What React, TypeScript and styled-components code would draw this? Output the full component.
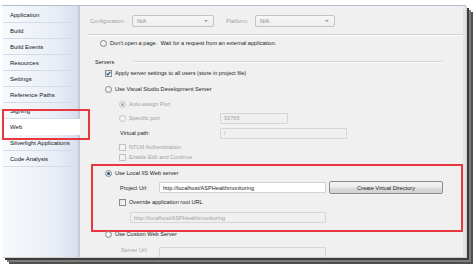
import React from 'react';
import styled, { createGlobalStyle, css } from 'styled-components';

const GlobalStyle = createGlobalStyle`
  html, body {
    margin: 0;
    padding: 0;
    background: #fff;
  }
  body {
    font-family: "Liberation Sans", Arial, sans-serif;
  }
`;

const tabs = [
  'Application',
  'Build',
  'Build Events',
  'Resources',
  'Settings',
  'Reference Paths',
  'Signing',
  'Web',
  'Silverlight Applications',
  'Code Analysis',
];

const Page = styled.div`
  width: 474px;
  height: 266px;
  overflow: hidden;
  box-sizing: border-box;
  padding: 5px 0 0 2px;
  background: #fff;
`;

const Window = styled.div`
  display: flex;
  width: 464px;
  height: 252px;
  box-sizing: border-box;
  border-top: 1px solid #b3bdd0;
  box-shadow: 1px 1px 0 #cfcfcf, 3px 3px 0 #3c3c3c, 5px 5px 0 #7c7c7c,
    7px 7px 0 #505050;
`;

const Sidebar = styled.nav`
  position: relative;
  flex: none;
  width: 78px;
  box-sizing: border-box;
  padding-top: 1px;
  display: flex;
  flex-direction: column;
  background: linear-gradient(to right, #f7f9fd, #e9eef6 70%, #d8dfec);
  border-right: 2px solid #c3cbdd;
`;

const Tab = styled.div<{ $active?: boolean }>`
  position: relative;
  height: 16px;
  box-sizing: border-box;
  display: flex;
  align-items: center;
  margin-left: 1px;
  padding-left: 7px;
  font-size: 6px;
  color: #151515;
  white-space: nowrap;
  border-bottom: 1px solid #d5dce9;

  ${(p) =>
    p.$active &&
    css`
      background: #fff;
      margin-right: -2px;
      padding-left: 6px;
      border-left: 1px solid #4a86c5;
      border-bottom-color: #fff;
    `}
`;

const Annotation = styled.span`
  position: absolute;
  z-index: 3;
  left: -2px;
  top: -10px;
  right: -10px;
  bottom: -6px;
  border: 2px solid #e8373f;
  pointer-events: none;
`;

const Main = styled.main`
  flex: 1;
  display: flex;
  flex-direction: column;
  overflow: hidden;
  background: #f0f0f0;
  border-right: 3px solid #e4e4e4;
  font-size: 5.6px;
  color: #1e1e1e;
`;

const Row = styled.div<{
  $top: number;
  $indent: number;
  $h?: number;
  $muted?: boolean;
  $start?: boolean;
}>`
  flex: none;
  display: flex;
  align-items: ${(p) => (p.$start ? 'flex-start' : 'center')};
  height: ${(p) => p.$h ?? 10}px;
  margin-top: ${(p) => p.$top}px;
  padding-left: ${(p) => p.$indent}px;
  color: ${(p) => (p.$muted ? '#a2a2a2' : '#1e1e1e')};
  white-space: nowrap;
`;

const Label = styled.span<{ $w?: number; $muted?: boolean }>`
  flex: none;
  width: ${(p) => (p.$w ? `${p.$w}px` : 'auto')};
  line-height: 6px;
  color: ${(p) => (p.$muted ? '#a2a2a2' : 'inherit')};
`;

const Dropdown = styled.div<{ $w: number }>`
  flex: none;
  position: relative;
  width: ${(p) => p.$w}px;
  height: 12px;
  box-sizing: border-box;
  display: flex;
  align-items: center;
  padding-left: 4px;
  margin-right: 12px;
  border: 1px solid #c4c4c4;
  border-radius: 2px;
  background: linear-gradient(#f6f6f6, #eeeeee);
  color: #8a8a8a;

  &::after {
    content: '';
    position: absolute;
    right: 5px;
    top: 4px;
    border-left: 2px solid transparent;
    border-right: 2px solid transparent;
    border-top: 2px solid #9a9a9a;
  }
`;

const Separator = styled.div<{ $left: number; $right: number; $top?: number }>`
  flex: ${(p) => (p.$top === undefined ? 1 : 'none')};
  margin: ${(p) => p.$top ?? 0}px ${(p) => p.$right}px 0 ${(p) => p.$left}px;
  border-top: 1px solid #d3d3d3;
  border-bottom: 1px solid #fbfbfb;
`;

const Radio = styled.span<{ $checked?: boolean; $disabled?: boolean }>`
  flex: none;
  width: 7px;
  height: 7px;
  box-sizing: border-box;
  margin-right: 3px;
  border-radius: 50%;
  display: flex;
  align-items: center;
  justify-content: center;
  border: 1px solid ${(p) => (p.$disabled ? '#c2c2c2' : '#8a8a8a')};
  background: ${(p) =>
    p.$disabled
      ? '#f3f3f3'
      : 'radial-gradient(circle at 40% 40%, #ffffff, #d9d9d9)'};

  &::after {
    content: '';
    width: 3px;
    height: 3px;
    border-radius: 50%;
    background: ${(p) =>
      p.$checked ? (p.$disabled ? '#a9a9a9' : '#1d4d8f') : 'transparent'};
  }
`;

const Box = styled.span<{ $disabled?: boolean }>`
  flex: none;
  width: 7px;
  height: 7px;
  box-sizing: border-box;
  margin-right: 3px;
  display: flex;
  border: 1px solid ${(p) => (p.$disabled ? '#c2c2c2' : '#8a8a8a')};
  background: ${(p) =>
    p.$disabled ? '#f3f3f3' : 'linear-gradient(135deg, #dedede, #ffffff)'};

  svg {
    width: 5px;
    height: 5px;
  }
`;

const Check = ({ checked, disabled }: { checked?: boolean; disabled?: boolean }) => (
  <Box $disabled={disabled}>
    {checked && (
      <svg viewBox="0 0 5 5">
        <path d="M0.6 2.6 L1.9 3.9 L4.4 0.8" fill="none" stroke="#244a8a" strokeWidth="1.1" />
      </svg>
    )}
  </Box>
);

const TextBox = styled.div<{ $w: number; $h?: number; $disabled?: boolean }>`
  flex: none;
  width: ${(p) => p.$w}px;
  height: ${(p) => p.$h ?? 11}px;
  box-sizing: border-box;
  display: flex;
  align-items: center;
  padding-left: 3px;
  border: 1px solid ${(p) => (p.$disabled ? '#d6d6d6' : '#cfd2d6')};
  border-radius: 1px;
  background: ${(p) => (p.$disabled ? '#f0f0f0' : '#ffffff')};
  color: ${(p) => (p.$disabled ? '#a2a2a2' : '#1e1e1e')};
`;

const Button = styled.button`
  flex: none;
  width: 114px;
  height: 13px;
  margin-left: 3px;
  padding: 0;
  font: inherit;
  font-size: 5.6px;
  color: #1e1e1e;
  border: 1px solid #8c8c8c;
  border-radius: 2px;
  background: linear-gradient(#f4f4f4, #ececec 48%, #dedede 52%, #d2d2d2);
`;

const Highlight = styled.section`
  flex: none;
  display: flex;
  flex-direction: column;
  width: 372px;
  height: 68px;
  box-sizing: border-box;
  margin: 2px 0 0 11px;
  border: 2px solid #e8373f;
`;

export default function App() {
  return (
    <Page>
      <GlobalStyle />
      <Window>
        <Sidebar>
          {tabs.map((t) => (
            <Tab key={t} $active={t === 'Web'}>
              {t}
              {t === 'Web' && <Annotation />}
            </Tab>
          ))}
        </Sidebar>

        <Main>
          <Row $top={9} $indent={10} $h={12} $muted>
            <Label $w={42}>Configuration:</Label>
            <Dropdown $w={82}>N/A</Dropdown>
            <Label $w={29}>Platform:</Label>
            <Dropdown $w={80}>N/A</Dropdown>
          </Row>
          <Separator $top={7} $left={8} $right={0} />

          <Row $top={2} $indent={20}>
            <Radio />
            Don’t open a page.&nbsp; Wait for a request from an external application.
          </Row>

          <Row $top={9} $indent={15}>
            <Label $w={38}>Servers</Label>
            <Separator $left={0} $right={20} />
          </Row>
          <Row $top={1} $indent={25}>
            <Check checked />
            Apply server settings to all users (store in project file)
          </Row>
          <Row $top={6} $indent={25}>
            <Radio />
            Use Visual Studio Development Server
          </Row>
          <Row $top={5} $indent={39} $muted>
            <Radio $checked $disabled />
            Auto-assign Port
          </Row>
          <Row $top={3} $indent={39} $h={12} $muted>
            <Radio $disabled />
            <Label $w={91}>Specific port</Label>
            <TextBox $w={68} $disabled>
              53765
            </TextBox>
          </Row>
          <Row $top={3} $indent={40} $h={12}>
            <Label $w={100}>Virtual path:</Label>
            <TextBox $w={127} $disabled>
              /
            </TextBox>
          </Row>
          <Row $top={3} $indent={39} $muted>
            <Check disabled />
            NTLM Authentication
          </Row>
          <Row $top={0} $indent={39} $muted>
            <Check disabled />
            Enable Edit and Continue
          </Row>

          <Highlight>
            <Row $top={2} $indent={12}>
              <Radio $checked />
              Use Local IIS Web server
            </Row>
            <Row $top={3} $indent={27} $h={13}>
              <Label $w={39}>Project Url:</Label>
              <TextBox $w={167}>http://localhost/ASPHealthmonitoring</TextBox>
              <Button>Create Virtual Directory</Button>
            </Row>
            <Row $top={3} $indent={26}>
              <Check />
              Override application root URL
            </Row>
            <Row $top={5} $indent={37} $h={11}>
              <TextBox $w={196} $disabled>
                http://localhost/ASPHealthmonitoring
              </TextBox>
            </Row>
          </Highlight>

          <Row $top={-3} $indent={25}>
            <Radio />
            Use Custom Web Server
          </Row>
          <Row $top={8} $indent={41} $h={11} $start>
            <Label $w={38} $muted>
              Server Url:
            </Label>
            <TextBox $w={167} $disabled />
          </Row>
        </Main>
      </Window>
    </Page>
  );
}
